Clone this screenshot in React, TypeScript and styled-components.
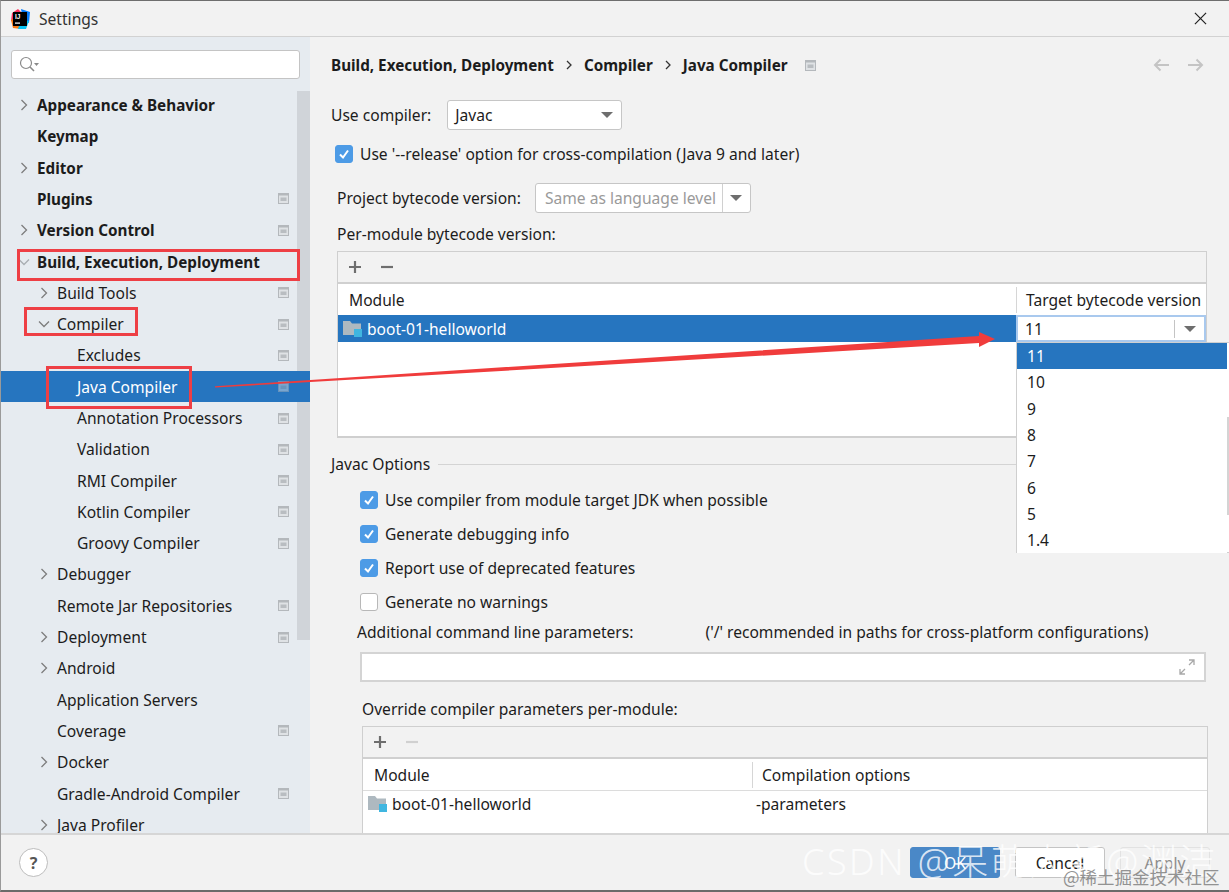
import React from 'react'
import styled, { createGlobalStyle } from 'styled-components'

const GlobalStyle = createGlobalStyle`
  html, body { margin: 0; padding: 0; background: #f2f2f2; }
  * { box-sizing: border-box; }
`

const FONT = `"Noto Sans", "Open Sans", "Noto Sans CJK SC", sans-serif`

const Page = styled.div`
  position: relative;
  width: 1229px;
  height: 892px;
  display: flex;
  flex-direction: column;
  overflow: hidden;
  background: #f2f2f2;
  border-top: 1px solid #6e6e6e;
  border-bottom: 2px solid #6a6a6a;
  border-left: 1px solid #9a9a9a;
  font-family: ${FONT};
  font-size: 15.6px;
  color: #1c1c1c;
`

const TitleBar = styled.div`
  height: 36px;
  flex: none;
  display: flex;
  align-items: center;
  padding: 0 22px 0 8px;
  gap: 8px;
  border-bottom: 1px solid #d2d2d2;
`

const Logo = styled.svg`
  flex: none;
`

const TitleText = styled.span`
  flex: 1;
  color: #333;
`

const Body = styled.div`
  flex: 1;
  min-height: 0;
  display: flex;
`

const Sidebar = styled.aside`
  position: relative;
  width: 309px;
  flex: none;
  background: #e6ebf0;
  overflow: hidden;
`

const SearchBox = styled.div`
  margin: 13px 10px 0;
  width: 289px;
  height: 29px;
  display: flex;
  align-items: center;
  padding-left: 7px;
  background: #fff;
  border: 1px solid #c4c4c4;
  border-radius: 3px;
`

const Tree = styled.div`
  position: relative;
  margin-top: 10.4px;
`

const Row = styled.div<{ $level: number; $selected?: boolean; $bold?: boolean }>`
  height: 31.3px;
  display: flex;
  align-items: center;
  padding-left: ${(p) => 16 + p.$level * 20}px;
  padding-right: 21px;
  font-size: ${(p) => (p.$bold ? '15.25px' : '15.6px')};
  font-weight: ${(p) => (p.$bold ? 700 : 400)};
  color: ${(p) => (p.$selected ? '#fff' : '#1c1c1c')};
  background: ${(p) => (p.$selected ? '#2675bf' : 'transparent')};
  white-space: nowrap;
`

const ArrowSlot = styled.span`
  width: 20px;
  flex: none;
  display: flex;
  align-items: center;
`

const RowLabel = styled.span`
  flex: 1;
`

const SideThumb = styled.div`
  position: absolute;
  left: 296px;
  top: 54px;
  width: 13px;
  height: 549px;
  background: #d0d4d9;
`

const Main = styled.main`
  flex: 1;
  min-width: 0;
  padding-left: 21px;
  overflow: hidden;
`

const Breadcrumb = styled.div`
  height: 24px;
  margin-top: 16px;
  padding-right: 25px;
  display: flex;
  align-items: center;
  font-size: 15.25px;
  font-weight: 700;
`

const Crumb = styled.span`
  white-space: nowrap;
`

const CrumbSep = styled.span`
  display: flex;
  width: 30px;
  justify-content: center;
`

const CrumbMark = styled.span`
  display: flex;
  margin-left: 17px;
`

const NavArrows = styled.div`
  margin-left: auto;
  display: flex;
  gap: 17px;
`

const NavSvg = styled.svg<{ $flip?: boolean }>`
  transform: ${(p) => (p.$flip ? 'scaleX(-1)' : 'none')};
`

const FormRow = styled.div<{ $top: number; $left?: number; $height?: number }>`
  margin-top: ${(p) => p.$top}px;
  margin-left: ${(p) => p.$left ?? 0}px;
  height: ${(p) => p.$height ?? 24}px;
  display: flex;
  align-items: center;
  white-space: nowrap;
`

const Combo = styled.div<{ $width: number; $left: number }>`
  width: ${(p) => p.$width}px;
  height: 30px;
  margin-left: ${(p) => p.$left}px;
  display: flex;
  align-items: center;
  background: #fff;
  border: 1px solid #c6c6c6;
  border-radius: 3px;
`

const ComboText = styled.span<{ $muted?: boolean }>`
  flex: 1;
  padding-left: ${(p) => (p.$muted ? 9 : 7)}px;
  color: ${(p) => (p.$muted ? '#9a9a9a' : '#1c1c1c')};
`

const ComboButton = styled.span<{ $divided?: boolean }>`
  width: 28px;
  height: 100%;
  flex: none;
  display: flex;
  align-items: center;
  justify-content: center;
  border-left: ${(p) => (p.$divided ? '1px solid #d0d0d0' : 'none')};
`

const Caret = styled.span`
  width: 0;
  height: 0;
  border-left: 6px solid transparent;
  border-right: 6px solid transparent;
  border-top: 6px solid #6e6e6e;
`

const CheckBox = styled.span<{ $checked?: boolean }>`
  width: 18px;
  height: 18px;
  flex: none;
  margin-right: 7px;
  display: flex;
  align-items: center;
  justify-content: center;
  border-radius: 3px;
  background: ${(p) => (p.$checked ? '#4d9be6' : '#fff')};
  border: 1px solid ${(p) => (p.$checked ? '#4d9be6' : '#b8b8b8')};
`

const Table = styled.div<{ $left: number; $width: number; $height: number; $top: number }>`
  margin-left: ${(p) => p.$left}px;
  margin-top: ${(p) => p.$top}px;
  width: ${(p) => p.$width}px;
  height: ${(p) => p.$height}px;
  border: 1px solid #cfcfcf;
  border-bottom-width: 2px;
  display: flex;
  flex-direction: column;
  background: #fff;
`

const TableTools = styled.div`
  height: 32px;
  flex: none;
  display: flex;
  align-items: center;
  gap: 18px;
  padding-left: 10px;
  background: #f2f2f2;
  border-bottom: 2px solid #d0d0d0;
`

const TableHead = styled.div`
  height: 31px;
  flex: none;
  display: flex;
  align-items: center;
`

const HeadCell = styled.div<{ $width?: number; $divided?: boolean }>`
  ${(p) => (p.$width ? `width: ${p.$width}px; flex: none;` : 'flex: 1;')}
  height: 26px;
  display: flex;
  align-items: center;
  padding-left: ${(p) => (p.$divided ? 9 : 11)}px;
  border-left: ${(p) => (p.$divided ? '1px solid #d6d6d6' : 'none')};
  white-space: nowrap;
`

const ModuleRow = styled.div<{ $selected?: boolean; $lined?: boolean }>`
  height: 27px;
  flex: none;
  display: flex;
  align-items: center;
  background: ${(p) => (p.$selected ? '#2675bf' : '#fff')};
  color: ${(p) => (p.$selected ? '#fff' : '#1c1c1c')};
  border-top: ${(p) => (p.$lined ? '1px solid #dcdcdc' : 'none')};
`

const ModuleName = styled.div<{ $width: number }>`
  width: ${(p) => p.$width}px;
  flex: none;
  display: flex;
  align-items: center;
  gap: 4px;
  padding-left: 5px;
  white-space: nowrap;
`

const CellCombo = styled.div`
  width: 190px;
  height: 27px;
  display: flex;
  align-items: center;
  background: #fff;
  color: #1c1c1c;
  border: 2px solid #a9c9ee;
`

const CellArrow = styled.span`
  width: 30px;
  height: 18px;
  flex: none;
  display: flex;
  align-items: center;
  justify-content: center;
  border-left: 1px solid #c4c4c4;
`

const GroupTitle = styled.div`
  margin-top: 14px;
  height: 24px;
  display: flex;
  align-items: center;
  gap: 8px;
  width: 876px;
`

const GroupLine = styled.span`
  flex: 1;
  height: 1px;
  background: #d4d4d4;
`

const HintText = styled.span`
  margin-left: 72px;
`

const TextField = styled.div`
  margin: 8px 0 0 29px;
  width: 846px;
  height: 30px;
  display: flex;
  align-items: center;
  justify-content: flex-end;
  padding-right: 9px;
  background: #fff;
  border: 2px solid #d4d4d4;
`

const Footer = styled.footer`
  height: 57px;
  flex: none;
  display: flex;
  align-items: center;
  padding: 0 19px 0 18px;
  border-top: 2px solid #d6d6d6;
`

const HelpButton = styled.div`
  width: 29px;
  height: 29px;
  display: flex;
  align-items: center;
  justify-content: center;
  border: 1px solid #bdbdbd;
  border-radius: 50%;
  background: #fff;
  color: #555;
  font-size: 16px;
  font-weight: 700;
`

const FooterButtons = styled.div`
  margin-left: auto;
  display: flex;
  gap: 15px;
`

const FooterButton = styled.div<{ $kind: 'primary' | 'normal' | 'disabled' }>`
  width: 90px;
  height: 31px;
  display: flex;
  align-items: center;
  justify-content: center;
  border-radius: 3px;
  background: ${(p) => (p.$kind === 'primary' ? '#4a88c7' : p.$kind === 'normal' ? '#fff' : 'transparent')};
  border: 1px solid ${(p) => (p.$kind === 'primary' ? '#4a88c7' : p.$kind === 'normal' ? '#c4c4c4' : '#e2e2e2')};
  color: ${(p) => (p.$kind === 'primary' ? '#fff' : p.$kind === 'normal' ? '#1c1c1c' : '#8c8c8c')};
`

const Popup = styled.div`
  position: absolute;
  left: 1015px;
  top: 341px;
  width: 213px;
  height: 211px;
  background: #fff;
  border: 1px solid #cfcfcf;
  border-right: none;
`

const PopupItem = styled.div<{ $selected?: boolean }>`
  height: 26.3px;
  display: flex;
  align-items: center;
  padding-left: 10px;
  margin-right: 2px;
  background: ${(p) => (p.$selected ? '#2675bf' : '#fff')};
  color: ${(p) => (p.$selected ? '#fff' : '#1c1c1c')};
`

const PopupThumb = styled.div`
  position: absolute;
  right: 0;
  top: 74px;
  width: 2px;
  height: 98px;
  background: #d4d4d4;
`

const RedBox = styled.div<{ $x: number; $y: number; $w: number; $h: number }>`
  position: absolute;
  left: ${(p) => p.$x}px;
  top: ${(p) => p.$y}px;
  width: ${(p) => p.$w}px;
  height: ${(p) => p.$h}px;
  border: 3px solid #ee3f45;
`

const Annotation = styled.svg`
  position: absolute;
  left: 0;
  top: 0;
  pointer-events: none;
`

const Watermark = styled.div`
  position: absolute;
  left: 801px;
  top: 836px;
  font-family: "Noto Sans", "Noto Sans CJK SC", sans-serif;
  font-size: 36px;
  line-height: 50px;
  font-weight: 300;
  letter-spacing: 2.5px;
  color: rgba(255, 255, 255, 0.8);
  white-space: nowrap;
`

const Stamp = styled.div`
  position: absolute;
  left: 1062px;
  top: 864px;
  font-family: "Noto Sans CJK SC", sans-serif;
  font-size: 17.5px;
  line-height: 24px;
  color: rgba(120, 120, 120, 0.8);
  white-space: nowrap;
`

const MarkSvg = styled.svg<{ $faint?: boolean }>`
  flex: none;
  opacity: ${(p) => (p.$faint ? 0.45 : 1)};
`

const FolderSvg = styled.svg`
  flex: none;
`

function Chevron({ open, light }: { open?: boolean; light?: boolean }) {
  return (
    <svg width="14" height="14" viewBox="0 0 14 14" fill="none" stroke={light ? '#a8adb2' : '#7d7d7d'} strokeWidth="1.3">
      {open ? <path d="M2 4.5 L7 9.5 L12 4.5" /> : <path d="M4.5 2 L9.5 7 L4.5 12" />}
    </svg>
  )
}

function ProjectMark({ faint }: { faint?: boolean }) {
  return (
    <MarkSvg width="11" height="11" viewBox="0 0 11 11" $faint={faint}>
      <rect x="0.5" y="0.5" width="10" height="10" fill="#dfe2e5" stroke="#b4b8bc" />
      <rect x="0.5" y="0.5" width="10" height="2" fill="#b4b8bc" />
      <rect x="2.5" y="4.5" width="6" height="3.5" fill="#b9bdc1" />
    </MarkSvg>
  )
}

function FolderIcon() {
  return (
    <FolderSvg width="20" height="18" viewBox="0 0 20 18">
      <path d="M0 1 H7 L9 3.5 H18 V15 H0 Z" fill="#aeb9c0" />
      <rect x="11" y="9" width="8" height="8" fill="#40b6e0" />
    </FolderSvg>
  )
}

function Check() {
  return (
    <svg width="12" height="12" viewBox="0 0 12 12" fill="none" stroke="#fff" strokeWidth="2">
      <path d="M2 6.5 L5 9.5 L10 2.5" />
    </svg>
  )
}

function PlusIcon() {
  return (
    <svg width="14" height="14" viewBox="0 0 14 14" fill="none" stroke="#6e6e6e" strokeWidth="2.2">
      <path d="M7 1 V13 M1 7 H13" />
    </svg>
  )
}

function MinusIcon({ faint }: { faint?: boolean }) {
  return (
    <svg width="14" height="14" viewBox="0 0 14 14" fill="none" stroke={faint ? '#d0d0d0' : '#6e6e6e'} strokeWidth="2.2">
      <path d="M1 7 H13" />
    </svg>
  )
}

function NavArrow({ flip }: { flip?: boolean }) {
  return (
    <NavSvg width="17" height="14" viewBox="0 0 17 14" fill="none" stroke="#c4c4c4" strokeWidth="2" $flip={flip}>
      <path d="M16 7 H2 M7.5 1.5 L2 7 L7.5 12.5" />
    </NavSvg>
  )
}

function CrumbArrow() {
  return (
    <svg width="8" height="10" viewBox="0 0 8 10" fill="none" stroke="#333" strokeWidth="1.3">
      <path d="M2 1 L6 5 L2 9" />
    </svg>
  )
}

type TreeItem = { label: string; level: number; arrow?: 'open' | 'closed'; mark?: boolean; bold?: boolean; selected?: boolean }

const treeItems: TreeItem[] = [
  { label: 'Appearance & Behavior', level: 0, arrow: 'closed', bold: true },
  { label: 'Keymap', level: 0, bold: true },
  { label: 'Editor', level: 0, arrow: 'closed', bold: true },
  { label: 'Plugins', level: 0, bold: true, mark: true },
  { label: 'Version Control', level: 0, arrow: 'closed', bold: true, mark: true },
  { label: 'Build, Execution, Deployment', level: 0, arrow: 'open', bold: true },
  { label: 'Build Tools', level: 1, arrow: 'closed', mark: true },
  { label: 'Compiler', level: 1, arrow: 'open', mark: true },
  { label: 'Excludes', level: 2, mark: true },
  { label: 'Java Compiler', level: 2, mark: true, selected: true },
  { label: 'Annotation Processors', level: 2, mark: true },
  { label: 'Validation', level: 2, mark: true },
  { label: 'RMI Compiler', level: 2, mark: true },
  { label: 'Kotlin Compiler', level: 2, mark: true },
  { label: 'Groovy Compiler', level: 2, mark: true },
  { label: 'Debugger', level: 1, arrow: 'closed' },
  { label: 'Remote Jar Repositories', level: 1, mark: true },
  { label: 'Deployment', level: 1, arrow: 'closed', mark: true },
  { label: 'Android', level: 1, arrow: 'closed' },
  { label: 'Application Servers', level: 1 },
  { label: 'Coverage', level: 1, mark: true },
  { label: 'Docker', level: 1, arrow: 'closed' },
  { label: 'Gradle-Android Compiler', level: 1, mark: true },
  { label: 'Java Profiler', level: 1, arrow: 'closed' },
]

const versions = ['11', '10', '9', '8', '7', '6', '5', '1.4']

export default function App() {
  return (
    <Page>
      <GlobalStyle />
      <TitleBar>
        <Logo width="22" height="22" viewBox="0 0 22 22">
          <path d="M3 5 L9 1 L14 6 L8 14 L2 13 Z" fill="#fe315d" />
          <path d="M12 1 L21 4 L20 15 L14 12 Z" fill="#087cfa" />
          <path d="M2 12 L8 9 L12 21 L4 20 Z" fill="#f97a12" />
          <path d="M12 12 L20 13 L17 21 L9 21 Z" fill="#07c3f2" />
          <rect x="4" y="4" width="14" height="14" fill="#000" />
          <text x="6" y="11" fontSize="6.5" fontWeight="700" fill="#fff" fontFamily="Liberation Sans, sans-serif">IJ</text>
          <rect x="6" y="14.5" width="5" height="1.2" fill="#fff" />
        </Logo>
        <TitleText>Settings</TitleText>
        <svg width="13" height="13" viewBox="0 0 14 14" fill="none" stroke="#222" strokeWidth="1.3">
          <path d="M1 1 L13 13 M13 1 L1 13" />
        </svg>
      </TitleBar>
      <Body>
        <Sidebar>
          <SideThumb />
          <SearchBox>
            <svg width="22" height="18" viewBox="0 0 22 18" fill="none" stroke="#8a8a8a" strokeWidth="1.2">
              <circle cx="7" cy="7" r="5.5" />
              <path d="M11 11 L15 15" strokeWidth="1.6" />
              <path d="M15 7 H20 L17.5 10 Z" fill="#8a8a8a" stroke="none" />
            </svg>
          </SearchBox>
          <Tree>
            {treeItems.map((item) => (
              <Row key={item.label} $level={item.level} $bold={item.bold} $selected={item.selected}>
                <ArrowSlot>
                  {item.arrow && <Chevron open={item.arrow === 'open'} light={item.label.startsWith('Build, ')} />}
                </ArrowSlot>
                <RowLabel>{item.label}</RowLabel>
                {item.mark && <ProjectMark faint={item.selected} />}
              </Row>
            ))}
          </Tree>
        </Sidebar>
        <Main>
          <Breadcrumb>
            <Crumb>Build, Execution, Deployment</Crumb>
            <CrumbSep><CrumbArrow /></CrumbSep>
            <Crumb>Compiler</Crumb>
            <CrumbSep><CrumbArrow /></CrumbSep>
            <Crumb>Java Compiler</Crumb>
            <CrumbMark><ProjectMark /></CrumbMark>
            <NavArrows>
              <NavArrow />
              <NavArrow flip />
            </NavArrows>
          </Breadcrumb>

          <FormRow $top={23} $height={30}>
            <span>Use compiler:</span>
            <Combo $width={175} $left={16}>
              <ComboText>Javac</ComboText>
              <ComboButton><Caret /></ComboButton>
            </Combo>
          </FormRow>
          <FormRow $top={12} $left={4}>
            <CheckBox $checked><Check /></CheckBox>
            <span>Use '--release' option for cross-compilation (Java 9 and later)</span>
          </FormRow>
          <FormRow $top={17} $left={6} $height={30}>
            <span>Project bytecode version:</span>
            <Combo $width={216} $left={14}>
              <ComboText $muted>Same as language level</ComboText>
              <ComboButton $divided><Caret /></ComboButton>
            </Combo>
          </FormRow>
          <FormRow $top={9} $left={6}>Per-module bytecode version:</FormRow>

          <Table $left={6} $top={5} $width={870} $height={187}>
            <TableTools>
              <PlusIcon />
              <MinusIcon />
            </TableTools>
            <TableHead>
              <HeadCell>Module</HeadCell>
              <HeadCell $width={190} $divided>Target bytecode version</HeadCell>
            </TableHead>
            <ModuleRow $selected>
              <ModuleName $width={678}>
                <FolderIcon />
                boot-01-helloworld
              </ModuleName>
              <CellCombo>
                <ComboText>11</ComboText>
                <CellArrow><Caret /></CellArrow>
              </CellCombo>
            </ModuleRow>
          </Table>

          <GroupTitle>
            <span>Javac Options</span>
            <GroupLine />
          </GroupTitle>
          <FormRow $top={12} $left={29}>
            <CheckBox $checked><Check /></CheckBox>
            <span>Use compiler from module target JDK when possible</span>
          </FormRow>
          <FormRow $top={10} $left={29}>
            <CheckBox $checked><Check /></CheckBox>
            <span>Generate debugging info</span>
          </FormRow>
          <FormRow $top={10} $left={29}>
            <CheckBox $checked><Check /></CheckBox>
            <span>Report use of deprecated features</span>
          </FormRow>
          <FormRow $top={10} $left={29}>
            <CheckBox />
            <span>Generate no warnings</span>
          </FormRow>
          <FormRow $top={6} $left={26}>
            <span>Additional command line parameters:</span>
            <HintText>('/' recommended in paths for cross-platform configurations)</HintText>
          </FormRow>
          <TextField>
            <svg width="16" height="16" viewBox="0 0 16 16" fill="none" stroke="#a8a8a8" strokeWidth="1.3">
              <path d="M1 15 L6 10 M1 10 V15 H6 M15 1 L10 6 M10 1 H15 V6" />
            </svg>
          </TextField>
          <FormRow $top={15} $left={31}>Override compiler parameters per-module:</FormRow>

          <Table $left={31} $top={5} $width={846} $height={140}>
            <TableTools>
              <PlusIcon />
              <MinusIcon faint />
            </TableTools>
            <TableHead>
              <HeadCell $width={389}>Module</HeadCell>
              <HeadCell $divided>Compilation options</HeadCell>
            </TableHead>
            <ModuleRow $lined>
              <ModuleName $width={393}>
                <FolderIcon />
                boot-01-helloworld
              </ModuleName>
              <span>-parameters</span>
            </ModuleRow>
          </Table>
        </Main>
      </Body>
      <Footer>
        <HelpButton>?</HelpButton>
        <FooterButtons>
          <FooterButton $kind="primary">OK</FooterButton>
          <FooterButton $kind="normal">Cancel</FooterButton>
          <FooterButton $kind="disabled">Apply</FooterButton>
        </FooterButtons>
      </Footer>

      <RedBox $x={16} $y={248} $w={283} $h={32} />
      <RedBox $x={23} $y={306} $w={114} $h={29} />
      <RedBox $x={45} $y={365} $w={146} $h={43} />
      <Annotation width="1229" height="892" viewBox="0 0 1229 892">
        <path d="M214 385.2 L978 335 L978 331 L994 338 L978 346 L978 342 L214 386.6 Z" fill="#f03c3c" />
      </Annotation>
      <Popup>
        {versions.map((v, i) => (
          <PopupItem key={v} $selected={i === 0}>{v}</PopupItem>
        ))}
        <PopupThumb />
      </Popup>
      <Watermark>CSDN @呆萌大新@渊洁</Watermark>
      <Stamp>@稀土掘金技术社区</Stamp>
    </Page>
  )
}
